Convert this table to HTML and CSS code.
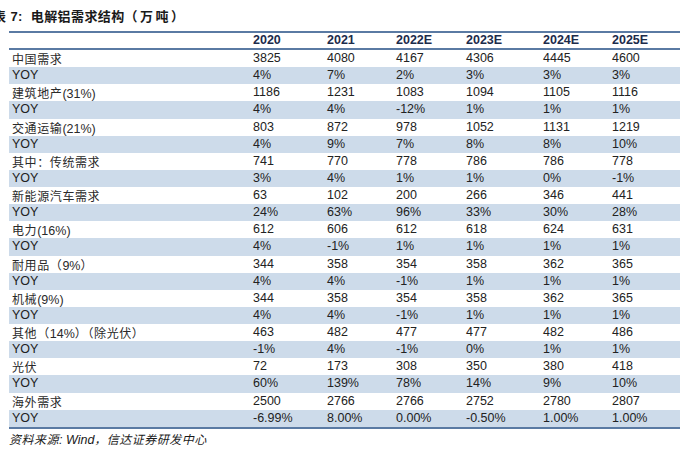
FILE: index.html
```html
<!DOCTYPE html>
<html lang="zh">
<head>
<meta charset="utf-8">
<link rel="stylesheet" href="styles.css">
</head>
<body>
<div class="title">表 7:&nbsp; 电解铝需求结构<span class="unit">（万吨）</span></div>
<div class="data">
  <div class="row head"><span></span><span>2020</span><span>2021</span><span>2022E</span><span>2023E</span><span>2024E</span><span>2025E</span></div>
  <div class="row"><span class="lbl">中国需求</span><span>3825</span><span>4080</span><span>4167</span><span>4306</span><span>4445</span><span>4600</span></div>
  <div class="row b"><span>YOY</span><span>4%</span><span>7%</span><span>2%</span><span>3%</span><span>3%</span><span>3%</span></div>
  <div class="row"><span class="lbl">建筑地产<i class="lat">(31%)</i></span><span>1186</span><span>1231</span><span>1083</span><span>1094</span><span>1105</span><span>1116</span></div>
  <div class="row b"><span>YOY</span><span>4%</span><span>4%</span><span>-12%</span><span>1%</span><span>1%</span><span>1%</span></div>
  <div class="row"><span class="lbl">交通运输<i class="lat">(21%)</i></span><span>803</span><span>872</span><span>978</span><span>1052</span><span>1131</span><span>1219</span></div>
  <div class="row b"><span>YOY</span><span>4%</span><span>9%</span><span>7%</span><span>8%</span><span>8%</span><span>10%</span></div>
  <div class="row"><span class="lbl">其中：传统需求</span><span>741</span><span>770</span><span>778</span><span>786</span><span>786</span><span>778</span></div>
  <div class="row b"><span>YOY</span><span>3%</span><span>4%</span><span>1%</span><span>1%</span><span>0%</span><span>-1%</span></div>
  <div class="row"><span class="lbl">新能源汽车需求</span><span>63</span><span>102</span><span>200</span><span>266</span><span>346</span><span>441</span></div>
  <div class="row b"><span>YOY</span><span>24%</span><span>63%</span><span>96%</span><span>33%</span><span>30%</span><span>28%</span></div>
  <div class="row"><span class="lbl">电力<i class="lat">(16%)</i></span><span>612</span><span>606</span><span>612</span><span>618</span><span>624</span><span>631</span></div>
  <div class="row b"><span>YOY</span><span>4%</span><span>-1%</span><span>1%</span><span>1%</span><span>1%</span><span>1%</span></div>
  <div class="row"><span class="lbl">耐用品（<i class="lat">9%</i>）</span><span>344</span><span>358</span><span>354</span><span>358</span><span>362</span><span>365</span></div>
  <div class="row b"><span>YOY</span><span>4%</span><span>4%</span><span>-1%</span><span>1%</span><span>1%</span><span>1%</span></div>
  <div class="row"><span class="lbl">机械<i class="lat">(9%)</i></span><span>344</span><span>358</span><span>354</span><span>358</span><span>362</span><span>365</span></div>
  <div class="row b"><span>YOY</span><span>4%</span><span>4%</span><span>-1%</span><span>1%</span><span>1%</span><span>1%</span></div>
  <div class="row"><span class="lbl">其他（<i class="lat">14%</i>）（除光伏）</span><span>463</span><span>482</span><span>477</span><span>477</span><span>482</span><span>486</span></div>
  <div class="row b"><span>YOY</span><span>-1%</span><span>4%</span><span>-1%</span><span>0%</span><span>1%</span><span>1%</span></div>
  <div class="row"><span class="lbl">光伏</span><span>72</span><span>173</span><span>308</span><span>350</span><span>380</span><span>418</span></div>
  <div class="row b"><span>YOY</span><span>60%</span><span>139%</span><span>78%</span><span>14%</span><span>9%</span><span>10%</span></div>
  <div class="row"><span class="lbl">海外需求</span><span>2500</span><span>2766</span><span>2766</span><span>2752</span><span>2780</span><span>2807</span></div>
  <div class="row b last"><span>YOY</span><span>-6.99%</span><span>8.00%</span><span>0.00%</span><span>-0.50%</span><span>1.00%</span><span>1.00%</span></div>
</div>
<div class="source">资料来源<i class="lat">: Wind</i>，信达证券研发中心</div>
</body>
</html>
```

FILE: styles.css
```css
html, body {
  margin: 0;
  padding: 0;
  background: #ffffff;
}
body {
  width: 693px;
  height: 464px;
  overflow: hidden;
  font-family: "Liberation Sans", "Noto Sans CJK SC", sans-serif;
  color: #1e1e1e;
}
.title {
  margin: 8px 0 0 -7px;
  height: 17px;
  line-height: 17px;
  font-family: "Liberation Sans", "Noto Sans CJK SC", sans-serif;
  font-weight: bold;
  font-size: 13px;
  color: #1a1a1a;
  letter-spacing: 0.4px;
  white-space: nowrap;
}
.title .unit {
  letter-spacing: 2.5px;
}
.data {
  margin: 6px 0 0 9px;
  width: 671px;
  font-size: 12.5px;
  border-top: 2px solid #5a7aa3;
}
.row {
  display: grid;
  grid-template-columns: 242px 74px 69px 70px 77px 69px 70px;
  height: 17.14px;
  line-height: 17px;
  white-space: nowrap;
  color: #222222;
  overflow: hidden;
}
.row > span {
  padding-left: 2px;
  overflow: hidden;
}
.row > span:first-child {
  padding-left: 3px;
}
.head {
  height: 15px;
  line-height: 15px;
  font-weight: bold;
  color: #1c2b4b;
  border-bottom: 2px solid #5a7aa3;
}
.lbl {
  font-family: "Noto Sans CJK SC", sans-serif;
  font-size: 12px;
  letter-spacing: 0.6px;
  color: #2a2a2a;
}
.lat {
  font-style: normal;
  font-family: "Liberation Sans", sans-serif;
  font-size: 12.5px;
  letter-spacing: 0;
}
.b {
  background: #cddbea;
}
.last {
  border-bottom: 2px solid #5a7aa3;
}
.source {
  margin: 2px 0 0 9px;
  font-family: "Noto Sans CJK SC", sans-serif;
  font-size: 12px;
  font-style: italic;
  color: #1a1a1a;
  line-height: 15px;
  letter-spacing: 0.5px;
}
.source .lat {
  font-style: italic;
}
```
